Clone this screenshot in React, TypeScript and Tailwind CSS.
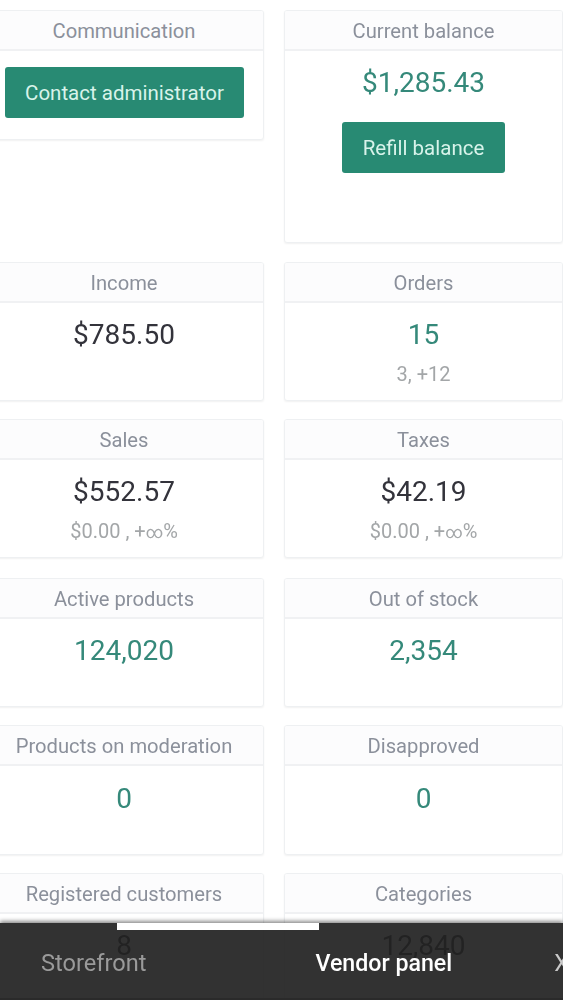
const font = { fontFamily: 'Roboto, "Liberation Sans", sans-serif' };

function Card({
  title,
  height,
  children,
  body = "pt-[15px]",
}: {
  title: string;
  height: string;
  children: React.ReactNode;
  body?: string;
}) {
  return (
    <div className={`${height} rounded-[3px] border border-[#eef0f2] bg-white shadow-[0_1px_2px_rgba(0,0,0,0.06)] overflow-hidden`}>
      <div className="h-[40px] pt-[2px] flex items-center justify-center border-b-2 border-[#f0f1f3] bg-[#fcfcfd] text-[20.2px] text-[#8b909b]">
        {title}
      </div>
      <div className={`flex flex-col items-center ${body}`}>{children}</div>
    </div>
  );
}

const Value = ({ children, dark }: { children: React.ReactNode; dark?: boolean }) => (
  <div className={`text-[28px] leading-[34px] ${dark ? "text-[#33333b]" : "text-[#35897a]"}`}>{children}</div>
);

const Sub = ({ children }: { children: React.ReactNode }) => (
  <div className="mt-[10px] text-[20px] leading-[24px] text-[#a3a6a8]">{children}</div>
);

const Btn = ({ children, w }: { children: React.ReactNode; w: string }) => (
  <div className={`${w} h-[51px] pt-[1px] flex items-center justify-center rounded-[3px] bg-[#288a73] text-[20.5px] text-[#d8f3ea]`}>
    {children}
  </div>
);

const Row = ({ top, children }: { top: string; children: React.ReactNode }) => (
  <div className={`${top} grid grid-cols-[280px_279px] gap-x-[20px]`}>{children}</div>
);

const Growth = () => (
  <>
    $0.00 , +<span className="text-[17px]">∞</span>%
  </>
);

export default function App() {
  return (
    <div className="relative h-[1000px] w-[563px] overflow-hidden bg-white" style={font}>
      <div className="-ml-[16px] w-[600px] pt-[10px] blur-[0.3px]">
        <div className="grid grid-cols-[280px_279px] gap-x-[20px] items-start">
          <Card title="Communication" height="h-[130px]" body="pt-[16px]">
            <div className="pl-[20px] pr-[19px] w-full">
              <Btn w="w-full">Contact administrator</Btn>
            </div>
          </Card>
          <Card title="Current balance" height="h-[233px]" body="pt-[15px]">
            <Value>$1,285.43</Value>
            <div className="mt-[22px]">
              <Btn w="w-[163px]">Refill balance</Btn>
            </div>
          </Card>
        </div>

        <Row top="mt-[19px]">
          <Card title="Income" height="h-[139px]">
            <Value dark>$785.50</Value>
          </Card>
          <Card title="Orders" height="h-[139px]">
            <Value>15</Value>
            <Sub>3, +12</Sub>
          </Card>
        </Row>

        <Row top="mt-[18px]">
          <Card title="Sales" height="h-[139px]">
            <Value dark>$552.57</Value>
            <Sub>
              <Growth />
            </Sub>
          </Card>
          <Card title="Taxes" height="h-[139px]">
            <Value dark>$42.19</Value>
            <Sub>
              <Growth />
            </Sub>
          </Card>
        </Row>

        <Row top="mt-[20px]">
          <Card title="Active products" height="h-[129px]">
            <Value>124,020</Value>
          </Card>
          <Card title="Out of stock" height="h-[129px]">
            <Value>2,354</Value>
          </Card>
        </Row>

        <Row top="mt-[18px]">
          <Card title="Products on moderation" height="h-[130px]" body="pt-[16px]">
            <Value>0</Value>
          </Card>
          <Card title="Disapproved" height="h-[130px]" body="pt-[16px]">
            <Value>0</Value>
          </Card>
        </Row>

        <Row top="mt-[18px]">
          <Card title="Registered customers" height="h-[130px]">
            <Value dark>8</Value>
          </Card>
          <Card title="Categories" height="h-[130px]">
            <Value dark>12,840</Value>
          </Card>
        </Row>
      </div>

      <div className="absolute left-0 right-0 top-[923px] h-[77px] bg-[#212121]/92 shadow-[0_-2px_4px_rgba(0,0,0,0.45)] border-b-[2px] border-[#2a2a2a]">
        <div className="absolute left-[117px] top-0 h-[7px] w-[202px] bg-white" />
        <div className="flex items-center h-full pt-[6px] text-[23.6px] whitespace-nowrap">
          <span className="ml-[41px] text-[#9a9a9a]">Storefront</span>
          <span className="ml-[169px] text-[23.2px] font-medium text-white">Vendor panel</span>
          <span className="ml-[102px] text-[#c9c9c9]">X</span>
        </div>
      </div>
    </div>
  );
}
